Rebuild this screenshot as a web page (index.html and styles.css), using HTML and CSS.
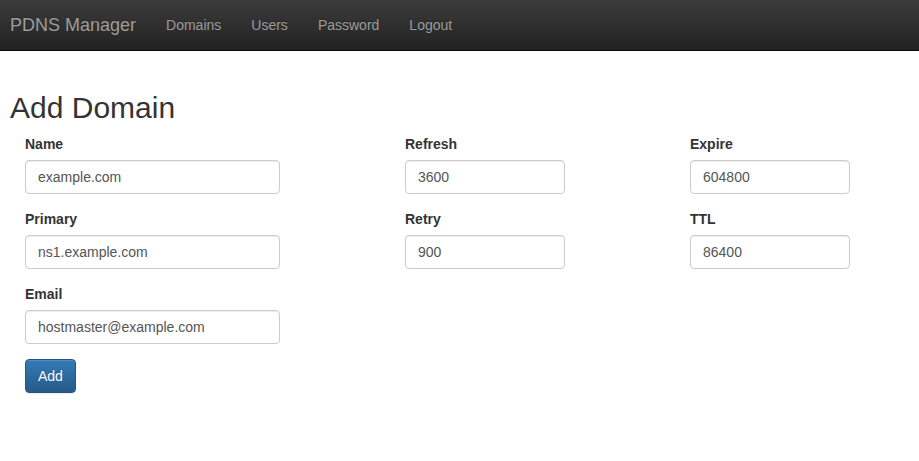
FILE: index.html
```html
<!DOCTYPE html>
<html lang="en">
<head>
<meta charset="utf-8">
<title>PDNS Manager</title>
<link rel="stylesheet" href="styles.css">
</head>
<body>
<nav class="navbar">
  <a class="brand" href="#">PDNS Manager</a>
  <ul class="nav">
    <li><a href="#">Domains</a></li>
    <li><a href="#">Users</a></li>
    <li><a href="#">Password</a></li>
    <li><a href="#">Logout</a></li>
  </ul>
</nav>
<main class="container">
  <h1>Add Domain</h1>
  <form class="form">
    <div class="column main">
      <div class="group"><label for="name">Name</label><input id="name" type="text" value="example.com"></div>
      <div class="group"><label for="primary">Primary</label><input id="primary" type="text" value="ns1.example.com"></div>
      <div class="group"><label for="email">Email</label><input id="email" type="text" value="hostmaster@example.com"></div>
      <button class="btn" type="button">Add</button>
    </div>
    <div class="column timing">
      <div class="group"><label for="refresh">Refresh</label><input id="refresh" type="text" value="3600"></div>
      <div class="group"><label for="retry">Retry</label><input id="retry" type="text" value="900"></div>
    </div>
    <div class="column lifetime">
      <div class="group"><label for="expire">Expire</label><input id="expire" type="text" value="604800"></div>
      <div class="group"><label for="ttl">TTL</label><input id="ttl" type="text" value="86400"></div>
    </div>
  </form>
</main>
</body>
</html>
```
FILE: styles.css
```css
* {
  box-sizing: border-box;
}

body {
  margin: 0;
  background: #fff;
  color: #333;
  font: 14px/20px "Liberation Sans", Arial, sans-serif;
}

.navbar {
  display: flex;
  min-height: 51px;
  border-bottom: 1px solid #080808;
  background: linear-gradient(#3c3c3c, #222);
}

.navbar a {
  color: #9d9d9d;
  text-decoration: none;
  text-shadow: 0 -1px 0 rgba(0, 0, 0, .25);
}

.navbar .brand {
  padding: 15px 15px 15px 10px;
  font-size: 18px;
}

.nav {
  display: flex;
  margin: 0;
  padding: 0;
  list-style: none;
}

.nav a {
  display: block;
  padding: 15px;
}

.container {
  padding: 39px 10px;
}

h1 {
  margin: 0 0 8px;
  font-size: 30px;
  font-weight: 500;
  line-height: 36px;
}

/* Nine equal tracks; tracks 4 and 7 separate the field columns. */
.form {
  display: grid;
  grid-template-columns: repeat(9, minmax(0, 1fr));
  max-width: 855px;
}

.column {
  padding: 0 15px;
}

.main {
  grid-column: 1 / span 3;
}

.timing {
  grid-column: 5 / span 2;
}

.lifetime {
  grid-column: 8 / span 2;
}

.group {
  margin-bottom: 15px;
}

label {
  display: block;
  margin-bottom: 6px;
  font-weight: 700;
}

input {
  display: block;
  width: 100%;
  height: 34px;
  padding: 6px 12px;
  border: 1px solid #ccc;
  border-radius: 4px;
  background: #fff;
  box-shadow: inset 0 1px 1px rgba(0, 0, 0, .075);
  color: #555;
  font: inherit;
}

.btn {
  padding: 6px 12px;
  border: 1px solid #245580;
  border-radius: 4px;
  background: linear-gradient(#337ab7, #265a88);
  box-shadow: inset 0 1px 0 rgba(255, 255, 255, .15), 0 1px 1px rgba(0, 0, 0, .075);
  color: #fff;
  font: inherit;
  text-shadow: 0 -1px 0 rgba(0, 0, 0, .2);
}
```
